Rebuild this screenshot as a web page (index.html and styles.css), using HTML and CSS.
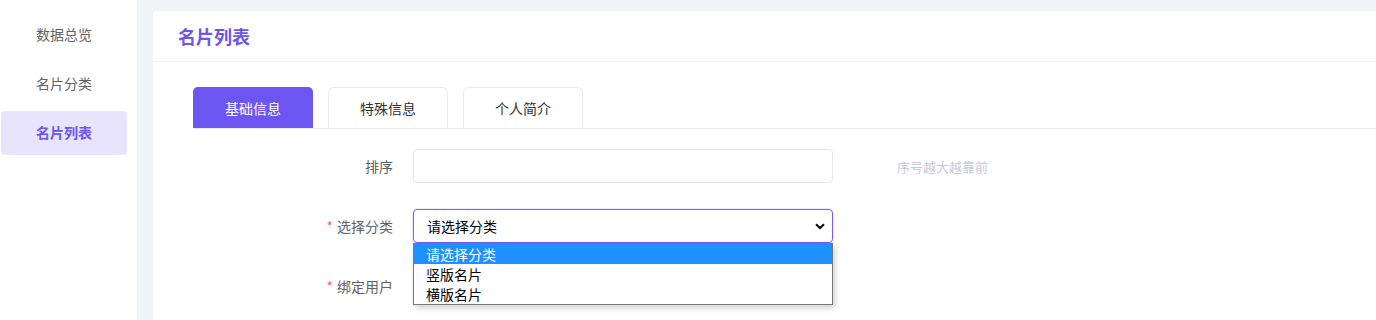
FILE: index.html
```html
<!DOCTYPE html>
<html lang="zh-CN">
<head>
<meta charset="utf-8">
<title>名片列表</title>
<link rel="stylesheet" href="styles.css">
</head>
<body>
<div class="layout">
  <aside class="sidebar">
    <a class="nav-item">数据总览</a>
    <a class="nav-item">名片分类</a>
    <a class="nav-item active">名片列表</a>
  </aside>
  <main class="main">
    <section class="card">
      <header class="card-header">名片列表</header>
      <div class="card-body">
        <div class="tabs">
          <div class="tab active">基础信息</div>
          <div class="tab">特殊信息</div>
          <div class="tab">个人简介</div>
        </div>
        <form class="form">
          <div class="form-row">
            <label class="form-label">排序</label>
            <div class="input"></div>
            <span class="hint">序号越大越靠前</span>
          </div>
          <div class="form-row">
            <label class="form-label"><span class="req">*</span>选择分类</label>
            <div class="select-wrap">
              <div class="select">
                <span>请选择分类</span>
                <svg class="chev" width="10" height="7" viewBox="0 0 10 7"><path d="M1 1.2 L5 5 L9 1.2" fill="none" stroke="#111" stroke-width="2.2"/></svg>
              </div>
              <ul class="dropdown">
                <li class="opt selected">请选择分类</li>
                <li class="opt">竖版名片</li>
                <li class="opt">横版名片</li>
              </ul>
            </div>
          </div>
          <div class="form-row">
            <label class="form-label"><span class="req">*</span>绑定用户</label>
            <div class="input"></div>
          </div>
        </form>
      </div>
    </section>
  </main>
</div>
</body>
</html>
```
FILE: styles.css
```css
* { box-sizing: border-box; }
html, body { margin: 0; padding: 0; }
body {
  font-family: "Noto Sans CJK SC", "Noto Sans", sans-serif;
  font-size: 14px;
  color: #606266;
  background: #f3f4f8;
  height: 320px;
  overflow: hidden;
}
.layout { display: flex; height: 320px; }
.sidebar {
  width: 137px;
  flex: none;
  background: #fff;
  padding: 13px 10px 0 1px;
  display: flex;
  flex-direction: column;
  gap: 5px;
}
.nav-item {
  height: 44px;
  line-height: 43px;
  padding-left: 35px;
  border-radius: 4px;
  color: #5f6368;
  font-size: 14px;
}
.nav-item.active {
  background: #e8e4fd;
  color: #6c55f0;
  font-weight: 700;
}
.main { flex: 1; padding: 11px 0 0 16px; min-width: 0; }
.card {
  background: #fff;
  border-radius: 4px 0 0 0;
  height: 100%;
}
.card-header {
  height: 51px;
  line-height: 50px;
  padding-left: 25px;
  font-size: 18px;
  font-weight: 700;
  color: #6c55f0;
  border-bottom: 1px solid #f0f1f4;
}
.card-body { padding: 25px 0 0 40px; }
.tabs {
  display: flex;
  gap: 15px;
  border-bottom: 1px solid #e6e8ee;
}
.tab {
  width: 120px;
  height: 41px;
  line-height: 40px;
  text-align: center;
  border: 1px solid #e9eaf0;
  border-bottom: none;
  border-radius: 6px 6px 0 0;
  color: #303133;
  font-size: 14px;
}
.tab.active {
  background: #6c55f0;
  border-color: #6c55f0;
  color: #fff;
  border-radius: 5px 5px 0 0;
}
.form { padding-top: 20px; display: flex; flex-direction: column; gap: 26px; }
.form-row { display: flex; align-items: center; height: 34px; }
.form-label {
  width: 220px;
  padding-right: 20px;
  text-align: right;
  color: #606266;
  font-size: 14px;
}
.req { color: #f56c6c; margin-right: 4px; }
.input {
  width: 420px;
  height: 34px;
  border: 1px solid #e4e7ed;
  border-radius: 4px;
}
.hint {
  margin-left: 64px;
  color: #c5cad8;
  font-size: 13px;
}
.select-wrap { position: relative; width: 420px; height: 34px; }
.select {
  height: 34px;
  border: 1px solid #7b5cf5;
  border-radius: 4px;
  padding: 0 7px 0 13px;
  display: flex;
  align-items: center;
  justify-content: space-between;
  color: #000;
  font-size: 14px;
  box-shadow: 0 0 0 1px rgba(123, 92, 245, 0.12);
}
.chev { display: block; }
.dropdown {
  position: absolute;
  left: 0;
  top: 34px;
  width: 420px;
  margin: 0;
  padding: 0;
  list-style: none;
  background: #fff;
  border: 1px solid #767676;
  box-shadow: 2px 3px 6px rgba(0, 0, 0, 0.18);
  z-index: 5;
}
.opt {
  height: 20px;
  line-height: 20px;
  padding-left: 12px;
  color: #000;
  font-size: 14px;
}
.opt.selected { background: #1e90ff; color: #fff; }
```
